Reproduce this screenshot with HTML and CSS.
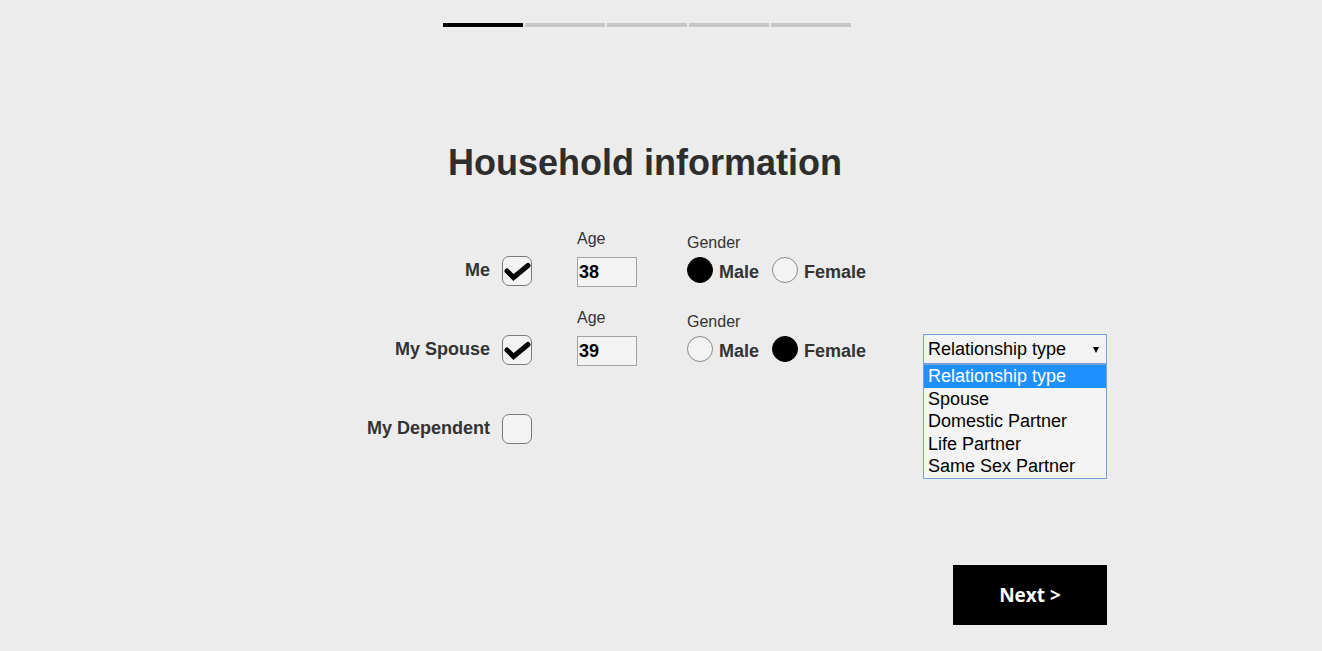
FILE: index.html
```html
<!DOCTYPE html>
<html lang="en">
<head>
  <meta charset="UTF-8" />
  <meta name="viewport" content="width=device-width, initial-scale=1.0" />
  <title>Household information</title>
  <link rel="stylesheet" href="styles.css">
</head>
<body>
  <div class="page">
    <div class="container">
      <!-- Step indicator -->
      <div class="steps">
        <span class="step active"></span>
        <span class="step"></span>
        <span class="step"></span>
        <span class="step"></span>
        <span class="step"></span>
      </div>

      <h1 class="title">Household information</h1>

      <div class="household">
        <!-- Me -->
        <div class="member">
          <div class="member-name">Me</div>
          <div class="check is-checked">
            <svg width="30" height="30" viewBox="0 0 30 30"><path d="M5 15 L11.5 21.5 L26 9.5" /></svg>
          </div>
          <div class="age">
            <div class="field-label">Age</div>
            <input class="age-input" type="text" value="38">
          </div>
          <div class="gender">
            <div class="field-label">Gender</div>
            <div class="radios">
              <span class="radio is-checked"></span><span class="radio-text">Male</span>
              <span class="radio"></span><span class="radio-text">Female</span>
            </div>
          </div>
        </div>

        <!-- Spouse -->
        <div class="member">
          <div class="member-name">My Spouse</div>
          <div class="check is-checked">
            <svg width="30" height="30" viewBox="0 0 30 30"><path d="M5 15 L11.5 21.5 L26 9.5" /></svg>
          </div>
          <div class="age">
            <div class="field-label">Age</div>
            <input class="age-input" type="text" value="39">
          </div>
          <div class="gender">
            <div class="field-label">Gender</div>
            <div class="radios">
              <span class="radio"></span><span class="radio-text">Male</span>
              <span class="radio is-checked"></span><span class="radio-text">Female</span>
            </div>
          </div>
          <div class="relation">
            <div class="select">
              Relationship type
              <span class="caret"></span>
            </div>
            <ul class="select-list">
              <li class="selected">Relationship type</li>
              <li>Spouse</li>
              <li>Domestic Partner</li>
              <li>Life Partner</li>
              <li>Same Sex Partner</li>
            </ul>
          </div>
        </div>

        <!-- Dependent -->
        <div class="member">
          <div class="member-name">My Dependent</div>
          <div class="check"></div>
        </div>
      </div>

      <div class="actions">
        <button class="next-btn">Next &gt;</button>
      </div>
    </div>
  </div>
</body>
</html>
```

FILE: styles.css
```css
/* Global */
body {
  margin: 0;
  padding: 0;
  background: #ececec;
  font-family: "Liberation Sans", Arial, sans-serif;
  color: #333;
}
.page {
  width: 1290px;
  padding-top: 23px;
}
.container {
  width: 924px;
  margin: 0 auto;
}

/* Step indicator */
.steps {
  display: flex;
  justify-content: center;
  gap: 2px;
  padding-left: 4px;
}
.step {
  width: 80px;
  height: 4px;
  background: #c6c6c6;
}
.step.active {
  background: #000;
}

.title {
  margin: 115px 0 47px;
  font-size: 36px;
  line-height: 42px;
  font-weight: bold;
  text-align: center;
  color: #2e2e2e;
}

/* Household rows */
.member {
  display: flex;
  align-items: flex-start;
  height: 79px;
}
.member-name {
  width: 307px;
  margin-top: 25px;
  margin-right: 12px;
  text-align: right;
  font-size: 18px;
  font-weight: bold;
  line-height: 29px;
}
.check {
  width: 30px;
  height: 30px;
  margin-top: 25px;
  box-sizing: border-box;
  border: 1px solid #7a7a7a;
  border-radius: 7px;
  background: #f3f3f3;
}
.check svg {
  display: block;
  margin: -1px;
}
.check path {
  fill: none;
  stroke: #000;
  stroke-width: 5;
  stroke-linecap: round;
  stroke-linejoin: miter;
}

.field-label {
  font-size: 16px;
  line-height: 16px;
  color: #333;
}
.age {
  width: 60px;
  margin-left: 45px;
}
.age .field-label {
  margin-bottom: 10px;
}
.age-input {
  display: block;
  width: 60px;
  height: 30px;
  margin: 0;
  padding: 0 1px;
  box-sizing: border-box;
  border: 1px solid #a3a3a3;
  background: #f3f3f3;
  font-family: "Liberation Sans", Arial, sans-serif;
  font-size: 18px;
  font-weight: bold;
  color: #000;
}

.gender {
  width: 236px;
  margin-left: 50px;
  margin-top: 4px;
}
.gender .field-label {
  margin-bottom: 6px;
}
.radios {
  display: flex;
  align-items: center;
  height: 26px;
}
.radio {
  width: 26px;
  height: 26px;
  box-sizing: border-box;
  border: 1px solid #8a8a8a;
  border-radius: 50%;
  background: #f3f3f3;
  margin-right: 6px;
}
.radio.is-checked {
  background: #000;
  border-color: #000;
}
.radio-text {
  font-size: 18px;
  font-weight: bold;
  margin-top: 4px;
  margin-right: 13px;
}

/* Relationship dropdown (shown open) */
.relation {
  position: relative;
  width: 184px;
  margin-top: 24px;
}
.select {
  position: relative;
  height: 30px;
  box-sizing: border-box;
  padding-left: 4px;
  border: 1px solid #7b9fd8;
  background: #f3f3f3;
  font-size: 18px;
  line-height: 29px;
  color: #000;
}
.caret {
  position: absolute;
  right: 7px;
  top: 12px;
  width: 0;
  height: 0;
  border-top: 6px solid #000;
  border-left: 3.5px solid transparent;
  border-right: 3.5px solid transparent;
}
.select-list {
  position: absolute;
  top: 30px;
  left: 0;
  width: 184px;
  box-sizing: border-box;
  margin: 0;
  padding: 0;
  list-style: none;
  border: 1px solid #7b9fd8;
  background: #f4f4f4;
  z-index: 10;
}
.select-list li {
  height: 22.6px;
  line-height: 22.6px;
  padding-left: 4px;
  font-size: 18px;
  color: #000;
  white-space: nowrap;
}
.select-list li.selected {
  background: #1e90ff;
  color: #fff;
}

/* Next button */
.actions {
  display: flex;
  justify-content: flex-end;
  margin-top: 97px;
}
.next-btn {
  width: 154px;
  height: 60px;
  border: none;
  background: #000;
  color: #fff;
  font-family: "Open Sans", sans-serif;
  font-size: 19px;
  font-weight: bold;
  cursor: pointer;
}
```
